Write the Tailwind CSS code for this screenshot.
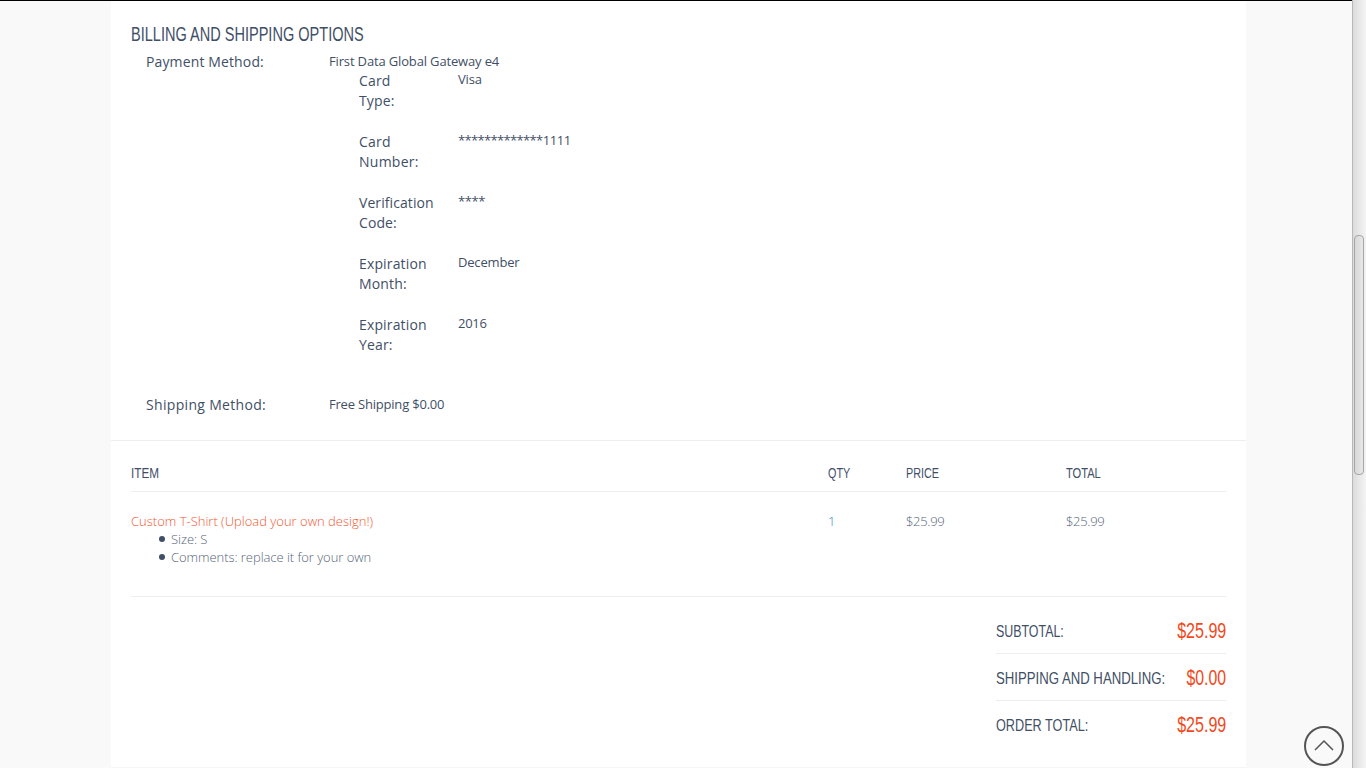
<!DOCTYPE html>
<html>
<head>
<meta charset="utf-8">
<script src="https://cdn.jsdelivr.net/npm/@tailwindcss/browser@4"></script>
</head>
<body class="m-0 overflow-hidden">
<div class="relative flex h-[768px] w-[1366px] bg-[#f9f9f9] font-['Open_Sans',sans-serif] text-[#3f4f66]">
  <div class="h-full w-[1352px] border-t border-black">
    <main class="ml-[111px] h-[767px] w-[1135px] border-b border-[#f5f5f5] bg-white">
      <section class="h-[440px] border-b border-[#eeeeee] pl-[20px] pt-[19px]">
        <h2 class="h-[28px] origin-left scale-x-[.727] whitespace-nowrap font-['Liberation_Sans',sans-serif] text-[20px] leading-[28px] text-[#3f4f66]">BILLING AND SHIPPING OPTIONS</h2>
        <div class="flex pl-[15px] pt-[4px]">
          <div class="w-[183px] text-[14px] leading-[20px] tracking-[.13px]">Payment Method:</div>
          <div class="flex-1">
            <div class="text-[13px] leading-[18px] tracking-[-.15px]">First Data Global Gateway e4</div>
            <div class="flex flex-col gap-[21px] pl-[30px] pt-[1px]">
              <div class="flex"><div class="w-[99px] text-[14px] leading-[20px] tracking-[.15px]">Card<br>Type:</div><div class="-mt-px text-[13px] leading-[18px] tracking-[-.18px]">Visa</div></div>
              <div class="flex"><div class="w-[99px] text-[14px] leading-[20px] tracking-[.25px]">Card<br>Number:</div><div class="-mt-px text-[13px] leading-[18px]"><span class="tracking-[-.65px]">*************</span><span class="tracking-[-.4px]">1111</span></div></div>
              <div class="flex"><div class="w-[99px] text-[14px] leading-[20px] tracking-[.08px]">Verification<br>Code:</div><div class="-mt-px text-[13px] leading-[18px] tracking-[-.4px]">****</div></div>
              <div class="flex"><div class="w-[99px] text-[14px] leading-[20px] tracking-[.15px]">Expiration<br>Month:</div><div class="-mt-px text-[13px] leading-[18px] tracking-[-.18px]">December</div></div>
              <div class="flex"><div class="w-[99px] text-[14px] leading-[20px] tracking-[.15px]">Expiration<br>Year:</div><div class="-mt-px text-[13px] leading-[18px] tracking-[-.3px]">2016</div></div>
            </div>
          </div>
        </div>
        <div class="flex pl-[15px] pt-[40px]">
          <div class="w-[183px] text-[14px] leading-[20px] tracking-[.32px]">Shipping Method:</div>
          <div class="text-[13px] leading-[18px] tracking-[-.2px]">Free Shipping $0.00</div>
        </div>
      </section>
      <section class="px-[20px]">
        <div class="flex h-[51px] items-center border-b border-[#eeeeee] pt-[14px] font-['Liberation_Sans',sans-serif] text-[15px]">
          <div class="w-[697px]"><span class="inline-block origin-left scale-x-[.78]">ITEM</span></div><div class="w-[78px]"><span class="inline-block origin-left scale-x-[.72]">QTY</span></div><div class="w-[160px]"><span class="inline-block origin-left scale-x-[.72]">PRICE</span></div><div><span class="inline-block origin-left scale-x-[.74]">TOTAL</span></div>
        </div>
        <div class="flex h-[105px] border-b border-[#eeeeee] pt-[20px] text-[13px] leading-[18px] font-light text-[#566579]">
          <div class="w-[697px]">
            <div class="text-[#f2572f]">Custom T-Shirt (Upload your own design!)</div>
            <ul class="pl-[28px] tracking-[-.05px]">
              <li class="flex items-center"><span class="mr-[6px] h-[6px] w-[6px] rounded-full bg-[#3f4f66]"></span>Size: S</li>
              <li class="flex items-center"><span class="mr-[6px] h-[6px] w-[6px] rounded-full bg-[#3f4f66]"></span>Comments: replace it for your own</li>
            </ul>
          </div>
          <div class="w-[78px] text-[#3b87c4]">1</div><div class="w-[160px] tracking-[-.3px]">$25.99</div><div class="tracking-[-.3px]">$25.99</div>
        </div>
        <div class="ml-auto w-[230px] font-['Liberation_Sans',sans-serif] text-[17px]">
          <div class="flex h-[57px] items-center justify-between border-b border-[#eeeeee] pt-[11px]"><span class="mt-[2px] w-0 origin-left scale-x-[.73] whitespace-nowrap">SUBTOTAL:</span><span class="origin-right scale-x-[.73] text-[22px] text-[#f2481b]">$25.99</span></div>
          <div class="flex h-[47px] items-center justify-between border-b border-[#eeeeee]"><span class="mt-[3px] w-0 origin-left scale-x-[.775] whitespace-nowrap">SHIPPING AND HANDLING:</span><span class="origin-right scale-x-[.72] text-[22px] text-[#f2481b]">$0.00</span></div>
          <div class="flex h-[47px] items-center justify-between"><span class="mt-[2px] w-0 origin-left scale-x-[.745] whitespace-nowrap">ORDER TOTAL:</span><span class="origin-right scale-x-[.73] text-[22px] text-[#f2481b]">$25.99</span></div>
        </div>
      </section>
    </main>
  </div>
  <div class="relative h-full w-[14px] border-l border-[#b8b8b8] bg-gradient-to-r from-[#dcdcdc] to-[#f4f4f4]">
    <div class="absolute left-[1px] top-[235px] h-[240px] w-[10px] rounded-[4px] border border-[#a6a6a6] bg-gradient-to-r from-[#d8d8d8] to-[#e8e8e8]"></div>
  </div>
  <div class="absolute left-[1304px] top-[726px] flex h-[40px] w-[40px] items-center justify-center rounded-full border-2 border-[#555555]">
    <svg class="-mt-[3px]" width="20" height="12" viewBox="0 0 20 12" fill="none" stroke="#555555" stroke-width="1.5"><path d="M1 11 L10 2 L19 11"/></svg>
  </div>
</div>
</body>
</html>
